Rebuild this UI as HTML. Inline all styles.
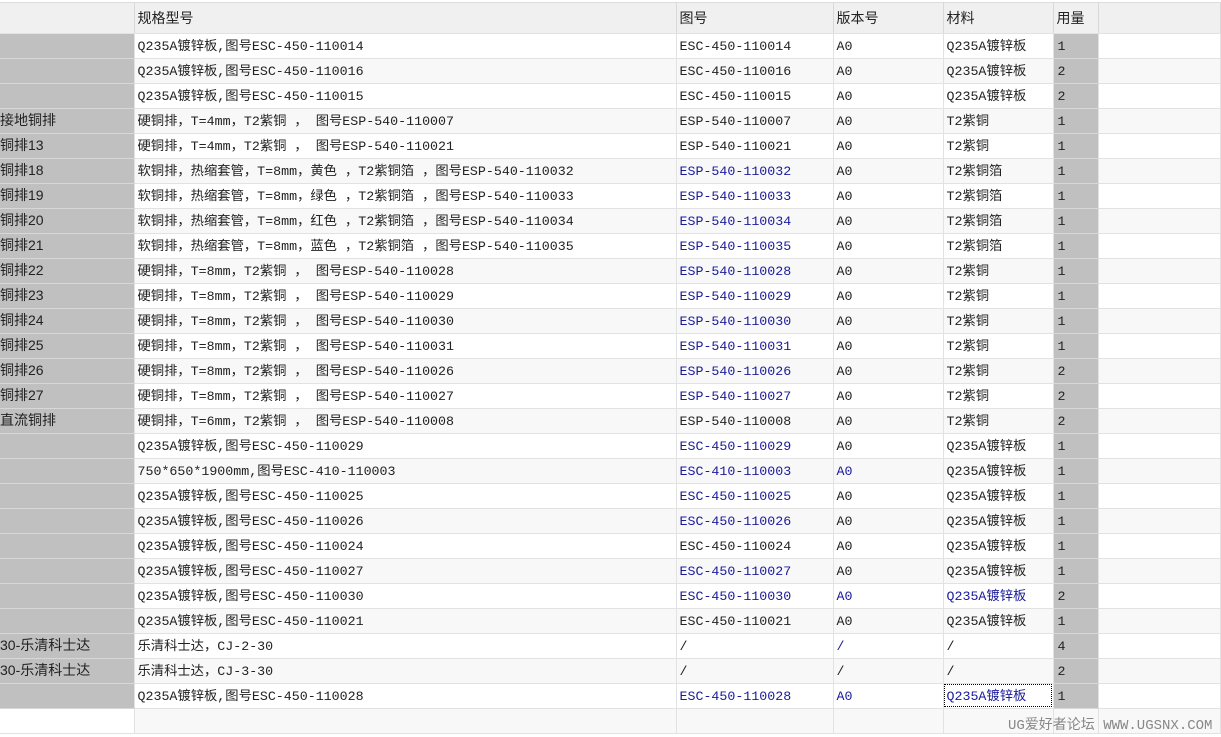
<!DOCTYPE html>
<html><head><meta charset="utf-8"><style>
body{margin:0;background:#fff;width:1221px;height:737px;overflow:hidden;font-family:"Liberation Mono","Noto Sans CJK SC",monospace;font-size:13.3px;color:#222}
.top{position:absolute;left:0;top:2px;width:1221px;height:1px;background:#ddd}
table{position:absolute;left:0;top:3px;border-collapse:collapse;table-layout:fixed;width:1221px}
td{height:25px;border-right:1px solid #e2e2e2;border-bottom:1px solid #e2e2e2;padding:1px 0 0 3px;white-space:nowrap;overflow:hidden;line-height:23px;box-sizing:border-box}
tr.h td{height:30px;background:#f0f0f0;font-family:"Liberation Sans","Noto Sans CJK SC",sans-serif;font-size:14px;border-right:1px solid #d8d8d8;padding-top:2px}
td.g{background:#c0c0c0;border-bottom:1px solid #d8d8d8;font-family:"Liberation Sans","Noto Sans CJK SC",sans-serif;font-size:14px;padding-left:0;padding-top:0}
td.q{background:#c0c0c0;border-bottom:1px solid #d8d8d8;padding-left:4px}
tr{height:25px}
tr.h{height:30px}
tr:nth-child(odd):not(.h) td:not(.g):not(.q){background:#f8f8f8}
.b{color:#1a1a9a}
.foc{outline:1px dotted #000;outline-offset:-2px}
.wm{position:absolute;left:1008px;top:714px;color:#888;font-size:14px;font-family:"Liberation Mono","Noto Sans CJK SC",monospace}
</style></head><body>
<div class="top"></div>
<table>
<col style="width:134px"><col style="width:542px"><col style="width:157px"><col style="width:110px"><col style="width:110px"><col style="width:45px"><col>
<tr class="h"><td></td><td>规格型号</td><td>图号</td><td>版本号</td><td>材料</td><td>用量</td><td></td></tr>
<tr><td class="g"></td><td>Q235A镀锌板,图号ESC-450-110014</td><td>ESC-450-110014</td><td>A0</td><td>Q235A镀锌板</td><td class="q">1</td><td></td></tr>
<tr><td class="g"></td><td>Q235A镀锌板,图号ESC-450-110016</td><td>ESC-450-110016</td><td>A0</td><td>Q235A镀锌板</td><td class="q">2</td><td></td></tr>
<tr><td class="g"></td><td>Q235A镀锌板,图号ESC-450-110015</td><td>ESC-450-110015</td><td>A0</td><td>Q235A镀锌板</td><td class="q">2</td><td></td></tr>
<tr><td class="g">接地铜排</td><td>硬铜排，T=4mm，T2紫铜 ， 图号ESP-540-110007</td><td>ESP-540-110007</td><td>A0</td><td>T2紫铜</td><td class="q">1</td><td></td></tr>
<tr><td class="g">铜排13</td><td>硬铜排，T=4mm，T2紫铜 ， 图号ESP-540-110021</td><td>ESP-540-110021</td><td>A0</td><td>T2紫铜</td><td class="q">1</td><td></td></tr>
<tr><td class="g">铜排18</td><td>软铜排，热缩套管，T=8mm，黄色 ，T2紫铜箔 ，图号ESP-540-110032</td><td class="b">ESP-540-110032</td><td>A0</td><td>T2紫铜箔</td><td class="q">1</td><td></td></tr>
<tr><td class="g">铜排19</td><td>软铜排，热缩套管，T=8mm，绿色 ，T2紫铜箔 ，图号ESP-540-110033</td><td class="b">ESP-540-110033</td><td>A0</td><td>T2紫铜箔</td><td class="q">1</td><td></td></tr>
<tr><td class="g">铜排20</td><td>软铜排，热缩套管，T=8mm，红色 ，T2紫铜箔 ，图号ESP-540-110034</td><td class="b">ESP-540-110034</td><td>A0</td><td>T2紫铜箔</td><td class="q">1</td><td></td></tr>
<tr><td class="g">铜排21</td><td>软铜排，热缩套管，T=8mm，蓝色 ，T2紫铜箔 ，图号ESP-540-110035</td><td class="b">ESP-540-110035</td><td>A0</td><td>T2紫铜箔</td><td class="q">1</td><td></td></tr>
<tr><td class="g">铜排22</td><td>硬铜排，T=8mm，T2紫铜 ， 图号ESP-540-110028</td><td class="b">ESP-540-110028</td><td>A0</td><td>T2紫铜</td><td class="q">1</td><td></td></tr>
<tr><td class="g">铜排23</td><td>硬铜排，T=8mm，T2紫铜 ， 图号ESP-540-110029</td><td class="b">ESP-540-110029</td><td>A0</td><td>T2紫铜</td><td class="q">1</td><td></td></tr>
<tr><td class="g">铜排24</td><td>硬铜排，T=8mm，T2紫铜 ， 图号ESP-540-110030</td><td class="b">ESP-540-110030</td><td>A0</td><td>T2紫铜</td><td class="q">1</td><td></td></tr>
<tr><td class="g">铜排25</td><td>硬铜排，T=8mm，T2紫铜 ， 图号ESP-540-110031</td><td class="b">ESP-540-110031</td><td>A0</td><td>T2紫铜</td><td class="q">1</td><td></td></tr>
<tr><td class="g">铜排26</td><td>硬铜排，T=8mm，T2紫铜 ， 图号ESP-540-110026</td><td class="b">ESP-540-110026</td><td>A0</td><td>T2紫铜</td><td class="q">2</td><td></td></tr>
<tr><td class="g">铜排27</td><td>硬铜排，T=8mm，T2紫铜 ， 图号ESP-540-110027</td><td class="b">ESP-540-110027</td><td>A0</td><td>T2紫铜</td><td class="q">2</td><td></td></tr>
<tr><td class="g">直流铜排</td><td>硬铜排，T=6mm，T2紫铜 ， 图号ESP-540-110008</td><td>ESP-540-110008</td><td>A0</td><td>T2紫铜</td><td class="q">2</td><td></td></tr>
<tr><td class="g"></td><td>Q235A镀锌板,图号ESC-450-110029</td><td class="b">ESC-450-110029</td><td>A0</td><td>Q235A镀锌板</td><td class="q">1</td><td></td></tr>
<tr><td class="g"></td><td>750*650*1900mm,图号ESC-410-110003</td><td class="b">ESC-410-110003</td><td class="b">A0</td><td>Q235A镀锌板</td><td class="q">1</td><td></td></tr>
<tr><td class="g"></td><td>Q235A镀锌板,图号ESC-450-110025</td><td class="b">ESC-450-110025</td><td>A0</td><td>Q235A镀锌板</td><td class="q">1</td><td></td></tr>
<tr><td class="g"></td><td>Q235A镀锌板,图号ESC-450-110026</td><td class="b">ESC-450-110026</td><td>A0</td><td>Q235A镀锌板</td><td class="q">1</td><td></td></tr>
<tr><td class="g"></td><td>Q235A镀锌板,图号ESC-450-110024</td><td>ESC-450-110024</td><td>A0</td><td>Q235A镀锌板</td><td class="q">1</td><td></td></tr>
<tr><td class="g"></td><td>Q235A镀锌板,图号ESC-450-110027</td><td class="b">ESC-450-110027</td><td>A0</td><td>Q235A镀锌板</td><td class="q">1</td><td></td></tr>
<tr><td class="g"></td><td>Q235A镀锌板,图号ESC-450-110030</td><td class="b">ESC-450-110030</td><td class="b">A0</td><td class="b">Q235A镀锌板</td><td class="q">2</td><td></td></tr>
<tr><td class="g"></td><td>Q235A镀锌板,图号ESC-450-110021</td><td>ESC-450-110021</td><td>A0</td><td>Q235A镀锌板</td><td class="q">1</td><td></td></tr>
<tr><td class="g">30-乐清科士达</td><td>乐清科士达，CJ-2-30</td><td>/</td><td class="b">/</td><td>/</td><td class="q">4</td><td></td></tr>
<tr><td class="g">30-乐清科士达</td><td>乐清科士达，CJ-3-30</td><td>/</td><td>/</td><td>/</td><td class="q">2</td><td></td></tr>
<tr><td class="g"></td><td>Q235A镀锌板,图号ESC-450-110028</td><td class="b">ESC-450-110028</td><td class="b">A0</td><td class="b foc">Q235A镀锌板</td><td class="q">1</td><td></td></tr>
<tr><td style="background:#fff"></td><td></td><td></td><td></td><td></td><td></td><td></td></tr>
</table>
<div class="wm">UG爱好者论坛 WWW.UGSNX.COM</div>
</body></html>
